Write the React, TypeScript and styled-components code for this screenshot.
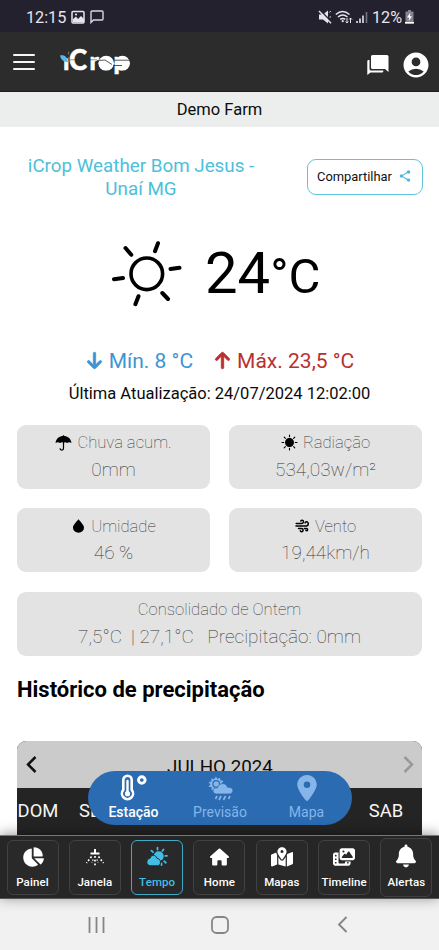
import React from "react";
import styled, { createGlobalStyle, css } from "styled-components";
import { FaArrowDown, FaArrowUp, FaBell, FaChartPie, FaHouse, FaLocationDot, FaMapLocationDot, FaPhotoFilm } from "react-icons/fa6";
import { MdAccountCircle, MdShare } from "react-icons/md";

const GlobalStyle = createGlobalStyle`
  * { box-sizing: border-box; }
  body { margin: 0; background: #fff; font-family: Roboto, "Liberation Sans", sans-serif; color: #0b0b0b; }
  svg { display: block; flex: none; }
`;

const Phone = styled.div`
  width: 439px;
  height: 950px;
  display: flex;
  flex-direction: column;
  overflow: hidden;
  background: #fff;
`;

const StatusBar = styled.div`
  height: 32px;
  flex: none;
  display: flex;
  align-items: center;
  justify-content: space-between;
  padding: 2px 25px 0 26px;
  background: #23212d;
  color: #e6e4ec;
  font-size: 16.2px;
`;

const StatusGroup = styled.div<{ $gap: number }>`
  display: flex;
  align-items: center;
  gap: ${(p) => p.$gap}px;
`;

const Header = styled.header`
  height: 60px;
  flex: none;
  display: flex;
  align-items: center;
  padding: 0 8px 0 13px;
  background: #2c2c2c;
  border-bottom: 1px solid #1c1c1c;
`;

const Burger = styled.div`
  width: 22px;
  height: 16px;
  margin-right: 24px;
  display: flex;
  flex-direction: column;
  justify-content: space-between;
  span { height: 2px; border-radius: 1px; background: #f6f6f6; }
`;

const HeaderActions = styled.div`
  margin-left: auto;
  padding-top: 7px;
  display: flex;
  align-items: center;
  gap: 12px;
  color: #fff;
`;

const FarmBar = styled.div`
  height: 35px;
  flex: none;
  display: flex;
  align-items: center;
  justify-content: center;
  padding-bottom: 1px;
  background: #ebeeed;
  font-size: 16.5px;
`;

const Content = styled.main`
  position: relative;
  flex: 1;
  min-height: 0;
  overflow: hidden;
  padding: 0 17px;
`;

const StationRow = styled.div`
  height: 100px;
  padding-top: 28px;
  display: flex;
  justify-content: space-between;
  align-items: flex-start;
`;

const StationName = styled.h1`
  width: 248px;
  margin: 0;
  color: #4dbfda;
  font-size: 18.8px;
  font-weight: 400;
  line-height: 22.5px;
  text-align: center;
  white-space: nowrap;
`;

const ShareButton = styled.button`
  width: 116px;
  height: 36px;
  margin: 4px -1px 0 0;
  padding: 0 10px 2px 9px;
  display: flex;
  align-items: center;
  justify-content: space-between;
  border: 1px solid #62c4da;
  border-radius: 9px;
  background: #fff;
  color: #111;
  font: 400 12.9px Roboto, sans-serif;
  svg { color: #48b9dc; }
`;

const Current = styled.section`
  height: 118px;
  display: flex;
  align-items: flex-start;
  padding: 12px 0 0 92px;
`;

const Degrees = styled.div`
  display: flex;
  align-items: baseline;
  margin: 0 0 0 22px;
  font-size: 58px;
  line-height: 68px;
  color: #000;
  small { font-size: 49px; }
`;

const Extremes = styled.div`
  height: 31px;
  display: flex;
  align-items: center;
  justify-content: center;
  gap: 20px;
`;

const Extreme = styled.div<{ $color: string }>`
  display: flex;
  align-items: center;
  gap: 5px;
  color: ${(p) => p.$color};
  font-size: 21px;
  svg { stroke: currentColor; stroke-width: 22px; }
`;

const Updated = styled.div`
  height: 48.5px;
  padding-top: 7px;
  text-align: center;
  font-size: 16.5px;
  line-height: 21px;
`;

const Cards = styled.section`
  display: grid;
  grid-template-columns: 193px 193px;
  grid-auto-rows: 64px;
  gap: 19.5px 19px;
`;

const Card = styled.div<{ $wide?: boolean }>`
  ${(p) => p.$wide && css`grid-column: 1 / -1;`}
  padding-top: 5px;
  display: flex;
  flex-direction: column;
  align-items: center;
  border-radius: 9px;
  background: #e3e3e3;
  color: #333;
  font-weight: 100;
`;

const CardTitle = styled.div`
  height: 26px;
  display: flex;
  align-items: center;
  gap: 5px;
  font-size: 16.6px;
  white-space: pre;
  svg { color: #000; }
`;

const CardValue = styled.div`
  height: 27px;
  font-size: 19px;
  line-height: 27px;
  white-space: pre;
`;

const SectionTitle = styled.h2`
  height: 85px;
  margin: 0;
  padding-top: 20px;
  font-size: 22px;
  font-weight: 700;
  line-height: 28px;
  color: #000;
`;

const Calendar = styled.section`
  height: 110px;
  overflow: hidden;
  border-radius: 9px 9px 0 0;
  background: #242424;
`;

const MonthBar = styled.div`
  height: 47px;
  display: flex;
  align-items: center;
  justify-content: space-between;
  padding: 1px 8px 0 9px;
  background: #cbcbcb;
  font-size: 18.8px;
  span { padding-top: 5px; }
`;

const WeekDays = styled.div`
  display: grid;
  grid-template-columns: repeat(7, 58px);
  padding-top: 11px;
  color: #f5f5f5;
  font-size: 18.4px;
  line-height: 24px;
`;

const WeekDay = styled.span<{ $column: number }>`
  grid-column: ${(p) => p.$column};
  width: 42px;
  text-align: center;
`;

const TabPill = styled.div`
  position: absolute;
  left: 88px;
  bottom: 10px;
  width: 264px;
  height: 54px;
  display: grid;
  grid-template-columns: 91px 82px 91px;
  border-radius: 27px;
  background: #2a6bb2;
`;

const Tab = styled.div<{ $active?: boolean }>`
  padding-top: 3px;
  display: flex;
  flex-direction: column;
  align-items: center;
  color: ${(p) => (p.$active ? "#fff" : "#86b5ea")};
  font-size: 14px;
  font-weight: ${(p) => (p.$active ? 500 : 400)};
  line-height: 18px;
`;

const MapPin = styled(FaLocationDot)`
  margin: 1px 0 2px;
`;

const BottomNav = styled.nav`
  position: relative;
  height: 64px;
  flex: none;
  display: grid;
  grid-template-columns: repeat(7, 52px);
  justify-content: space-between;
  align-items: center;
  padding: 0 6.5px;
  border-top: 1px solid #777;
  border-bottom: 1px solid #555;
  background: #262626;
  box-shadow: 0 -1px 12px rgba(0, 0, 0, 0.42);
`;

const NavItem = styled.div<{ $active?: boolean; $tall?: boolean }>`
  height: ${(p) => (p.$tall ? 59 : 55)}px;
  padding-top: ${(p) => (p.$tall ? 5 : 4)}px;
  display: flex;
  flex-direction: column;
  align-items: center;
  gap: ${(p) => (p.$tall ? 6 : 5)}px;
  border: 1px solid ${(p) => (p.$active ? "#3fa9c6" : "#414141")};
  border-radius: 6px;
  background: #292929;
  color: ${(p) => (p.$active ? "#42bde5" : "#fff")};
  font-size: 11.5px;
  font-weight: 500;
  line-height: 16px;
  letter-spacing: 0.1px;
  svg { height: 24px; }
`;

const SystemBar = styled.footer`
  height: 51px;
  flex: none;
  display: grid;
  grid-template-columns: 123px 123px 123px;
  justify-content: center;
  align-items: center;
  justify-items: center;
  background: #f1f1f1;
`;

const Logo = () => (
  <svg width="74" height="34" viewBox="0 0 74 34">
    <text x="4 10 30.5 39.5 54.5" y="25" fill="#fff" stroke="#fff" strokeWidth="0.5" fontFamily="Lato, sans-serif" fontWeight="900" fontSize="25">
      i<tspan fontSize="27.5">C</tspan>rop
    </text>
    <rect x="3" y="4" width="6.5" height="9.5" fill="#2c2c2c" />
    <path d="M1 10.5C4 9.5 8.4 11 9 17C5.5 17 2 15.5 1 10.5Z" fill="#52bbea" />
    <ellipse cx="47.2" cy="18.2" rx="7.8" ry="7.4" fill="#fff" />
    <ellipse cx="63.4" cy="18.2" rx="7.6" ry="7.4" fill="#fff" />
    <path d="M38 15.5L46 15M46 15L53 19.5M54 20.5H63M55 15.2H71" fill="none" stroke="#2c2c2c" strokeWidth="0.8" />
    <path d="M9 14.8H38" stroke="#2c2c2c" strokeWidth="0.5" />
  </svg>
);

const PictureIcon = () => (
  <svg width="14" height="14" viewBox="0 0 14 14">
    <rect x="1" y="1.5" width="12" height="11.5" rx="1" fill="none" stroke="#e6e4ec" strokeWidth="1.5" />
    <path d="M2 12V9L5 6.5L7 9L10 6L13 9V12.5Z" fill="#e6e4ec" />
    <circle cx="5" cy="4.5" r="1.1" fill="#e6e4ec" />
  </svg>
);

const BubbleIcon = () => (
  <svg width="14" height="14" viewBox="0 0 14 14" fill="none" stroke="#d9d3ea" strokeWidth="1.4">
    <path d="M1 12.5V2Q1 1 2 1H12Q13 1 13 2V9Q13 10 12 10H3.5Z" />
  </svg>
);

const MuteIcon = () => (
  <svg width="14" height="14" viewBox="0 0 14 14" fill="#e6e4ec">
    <path d="M1 4.5H5L10 .5V13.5L5 9.5H1Z" />
    <path d="M11.3 2.5L12.8 1M11.5 7H13" fill="none" stroke="#e6e4ec" />
    <path d="M2 .2L14 12.4" stroke="#23212d" strokeWidth="1.5" />
    <path d="M1 1L13 13.2" stroke="#e6e4ec" strokeWidth="1.5" />
  </svg>
);

const WifiIcon = () => (
  <svg width="18" height="14" viewBox="0 0 18 14" fill="none" stroke="#e6e4ec" strokeWidth="1.5">
    <path d="M.8 4.5Q7.5-1.5 14.5 4.5M3 7Q7.7 3 12.5 7M5.2 9.4Q7.7 7.4 10.2 9.4" />
    <circle cx="7.7" cy="11.2" r="1.1" fill="#e6e4ec" stroke="none" />
    <path d="M12 8V13M10.5 11.5L12 13L13.4 11.5M15.5 13V8M14.1 9.5L15.5 8L17 9.5" strokeWidth="1" />
  </svg>
);

const SignalIcon = () => (
  <svg width="13" height="14" viewBox="0 0 13 14">
    <path d="M1 13V11M4 13V8.5M7 13V5.5" stroke="#e6e4ec" strokeWidth="1.6" />
    <path d="M10.5 13V2" stroke="#77747f" strokeWidth="1.6" />
  </svg>
);

const BatteryIcon = () => (
  <svg width="9" height="14" viewBox="0 0 9 14">
    <path d="M3 0H6V1.5H8.5V13.5H.5V1.5H3Z" fill="#85838d" />
    <path d="M0 12H9V13.6H0Z" fill="#fff" />
    <path d="M5.4 2.5L2 7.6H4.2L3.7 11L7 6.2H4.8Z" fill="#fff" />
  </svg>
);

const ChatIcon = () => (
  <svg width="22" height="22" viewBox="0 0 22 22" fill="#fff">
    <path d="M5.5 1H20Q21.5 1 21.5 2.5V18L18 15H5.5Q4 15 4 13.5V2.5Q4 1 5.5 1Z" />
    <path d="M2.5 6H1.5Q.3 6 .3 7.2V21L3.5 18.5H15Q16.3 18.5 16.3 17.2V16.6H4Q2.5 16.6 2.5 15Z" />
  </svg>
);

const BigSun = () => (
  <svg width="74" height="74" viewBox="0 0 74 74" fill="none" stroke="#000" strokeLinecap="round">
    <circle cx="37.8" cy="34.8" r="15.8" strokeWidth="3.6" />
    <path d="M46 12.2L49 4.2M61.5 30L70.5 28.7M53.3 54L59 60M29.5 57.2L26.4 65.2M14 39L5 40.2M22.3 15.8L16.5 9" strokeWidth="4" />
  </svg>
);

const UmbrellaIcon = () => (
  <svg width="17" height="16" viewBox="0 0 17 16">
    <path d="M.5 8C1 3.5 4.5 1 8.5 1S16 3.5 16.5 8Q14 6.5 12 8Q10 6.7 8.5 8Q7 6.7 5 8Q3 6.5 .5 8Z" fill="#000" />
    <path d="M8.5 .3V13Q8.5 15.1 6.7 15.1Q5 15.1 5 13.3" fill="none" stroke="#000" strokeWidth="1.2" />
  </svg>
);

const DropIcon = () => (
  <svg width="15" height="14" viewBox="0 0 15 14">
    <path d="M7.5 .3C9.5 3 13 5.8 13 8.7A5.5 5 0 0 1 2 8.7C2 5.8 5.5 3 7.5 .3Z" fill="#000" />
  </svg>
);

const SmallSun = () => (
  <svg width="17" height="17" viewBox="0 0 17 17" stroke="#000" strokeWidth="1.1" strokeLinecap="round">
    <circle cx="8.5" cy="8.5" r="3.9" fill="#000" />
    <path d="M8.5 1V2.7M8.5 14.3V16M1 8.5H2.7M14.3 8.5H16M3.2 3.2L4.4 4.4M12.6 12.6L13.8 13.8M3.2 13.8L4.4 12.6M12.6 4.4L13.8 3.2" />
  </svg>
);

const WindIcon = () => (
  <svg width="15" height="14" viewBox="0 0 15 14" fill="none" stroke="#000" strokeWidth="1.5" strokeLinecap="round">
    <path d="M1.2 4.4H6.8C9 4.4 8.9 1 6.9 1.2Q6 1.3 5.8 2" />
    <path d="M1 6.9H11.2C14 6.9 13.8 2.6 11.4 2.8Q10.3 2.9 10.1 3.9" />
    <path d="M3.5 9.4H6.5C8.6 9.4 8.5 12.9 6.5 12.7Q5.6 12.6 5.3 11.8M9.5 9.4H11.2Q13 9.6 12.5 11.1Q12 12.1 10.9 11.4" />
  </svg>
);

const Chevron = ({ left, color, size = 17, stroke = 2.5 }: { left?: boolean; color: string; size?: number; stroke?: number }) => (
  <svg width={size * 0.65} height={size} viewBox="0 0 11 17" fill="none" stroke={color} strokeWidth={stroke}>
    <path d={left ? "M9.5 1L2 8.5L9.5 16" : "M1.5 1L9 8.5L1.5 16"} />
  </svg>
);

const Thermometer = () => (
  <svg width="30" height="29" viewBox="0 0 30 29" fill="none" stroke="#fff">
    <path d="M4.3 6a4.2 4.2 0 0 1 8.4 0V15.8a5.6 5.6 0 1 1-8.4 0Z" strokeWidth="2.6" />
    <path d="M8.5 7V18" strokeWidth="2.4" strokeLinecap="round" />
    <circle cx="8.5" cy="19.7" r="2.6" fill="#fff" stroke="none" />
    <circle cx="22.8" cy="6" r="3.3" strokeWidth="2.9" />
  </svg>
);

const ForecastIcon = () => (
  <svg width="28" height="29" viewBox="0 0 28 29" fill="#86b5ea" stroke="#86b5ea">
    <path d="M10 2.5L11.3 5L14 3.8L14.5 6.6L17.5 6.8L16 9L9 17L5.5 16L5.8 13.2L2.5 12.7L4.4 10.4L2.5 8L5.4 7.4L5.2 4.5L8 5.2Z" stroke="none" />
    <circle cx="10.2" cy="9.9" r="3.3" fill="none" stroke="#2a6bb2" strokeWidth="1.2" />
    <path d="M10.5 20C4.8 19.5 6.5 12.8 11.3 13.8C13 8.2 20.3 8.4 21.5 13.2C28.5 12.5 28.5 20 23 20Z" stroke="#2a6bb2" strokeWidth="0.8" />
    <path d="M11 22L9.5 25M15 22L13 26M19.5 22L17.5 26M24 22L22.5 25" strokeWidth="1.7" />
  </svg>
);

const SprinklerIcon = () => (
  <svg width="20" height="24" viewBox="0 0 20 24" fill="none" stroke="#fff" strokeWidth="1.7">
    <path d="M10 4V8M5.5 8.5H14.5" strokeWidth="2" />
    <path d="M10 11V21M6.5 11.5L1.5 18M13.5 11.5L18.5 18" strokeDasharray="1.8 1.9" />
    <path d="M8.2 14.5L6.8 17.5M11.8 14.5L13.2 17.5" strokeDasharray="1.5 1.3" strokeWidth="1.2" />
  </svg>
);

const WeatherIcon = () => (
  <svg width="22" height="24" viewBox="0 0 22 24" fill="#42bde5" stroke="#42bde5">
    <circle cx="12.7" cy="11.2" r="5" stroke="none" />
    <path d="M11.5 2.7V4.6M17.5 4.5L16.4 6M21 10.8H19.2M19.8 17.7L18.2 16.3M5.4 5.7L7 7.2M15.5 20V18.4" strokeWidth="1.8" strokeLinecap="round" />
    <path d="M4.8 20.8C-.4 20.8-.4 14 4.1 13.2C4.9 9.4 10 9.4 11 13.4C15.6 13.7 15.6 20.8 11.3 20.8Z" stroke="#292929" strokeWidth="1" />
  </svg>
);

const metrics = [
  { label: "Chuva acum.", value: "0mm", icon: <UmbrellaIcon /> },
  { label: "Radiação", value: "534,03w/m²", icon: <SmallSun /> },
  { label: "Umidade", value: "46 %", icon: <DropIcon /> },
  { label: "Vento", value: "19,44km/h", icon: <WindIcon /> },
];

const weekDays = [
  { label: "DOM", column: 1 },
  { label: "SEG", column: 2 },
  { label: "SAB", column: 7 },
];

const navigation = [
  { label: "Painel", icon: <FaChartPie size={22} /> },
  { label: "Janela", icon: <SprinklerIcon /> },
  { label: "Tempo", icon: <WeatherIcon />, active: true },
  { label: "Home", icon: <FaHouse size={19} /> },
  { label: "Mapas", icon: <FaMapLocationDot size={22} /> },
  { label: "Timeline", icon: <FaPhotoFilm size={22} /> },
  { label: "Alertas", icon: <FaBell size={20} />, tall: true },
];

export default function App() {
  return (
    <Phone>
      <GlobalStyle />
      <StatusBar>
        <StatusGroup $gap={5}>
          <span>12:15</span>
          <PictureIcon />
          <BubbleIcon />
        </StatusGroup>
        <StatusGroup $gap={3}>
          <MuteIcon />
          <WifiIcon />
          <SignalIcon />
          <span>12%</span>
          <BatteryIcon />
        </StatusGroup>
      </StatusBar>
      <Header>
        <Burger><span /><span /><span /></Burger>
        <Logo />
        <HeaderActions>
          <ChatIcon />
          <MdAccountCircle size={30} />
        </HeaderActions>
      </Header>
      <FarmBar>Demo Farm</FarmBar>
      <Content>
        <StationRow>
          <StationName>iCrop Weather Bom Jesus -<br />Unaí MG</StationName>
          <ShareButton>Compartilhar<MdShare size={14} /></ShareButton>
        </StationRow>
        <Current>
          <BigSun />
          <Degrees>24<small>°C</small></Degrees>
        </Current>
        <Extremes>
          <Extreme $color="#3e95d2"><FaArrowDown size={19} />Mín. 8 °C</Extreme>
          <Extreme $color="#ba302f"><FaArrowUp size={19} />Máx. 23,5 °C</Extreme>
        </Extremes>
        <Updated>Última Atualização: 24/07/2024 12:02:00</Updated>
        <Cards>
          {metrics.map((m) => (
            <Card key={m.label}>
              <CardTitle>{m.icon}{m.label}</CardTitle>
              <CardValue>{m.value}</CardValue>
            </Card>
          ))}
          <Card $wide>
            <CardTitle>Consolidado de Ontem</CardTitle>
            <CardValue>{"7,5°C  | 27,1°C   Precipitação: 0mm"}</CardValue>
          </Card>
        </Cards>
        <SectionTitle>Histórico de precipitação</SectionTitle>
        <Calendar>
          <MonthBar>
            <Chevron left color="#111" />
            <span>JULHO 2024</span>
            <Chevron color="#999" />
          </MonthBar>
          <WeekDays>
            {weekDays.map((d) => <WeekDay key={d.label} $column={d.column}>{d.label}</WeekDay>)}
          </WeekDays>
        </Calendar>
        <TabPill>
          <Tab $active><Thermometer />Estação</Tab>
          <Tab><ForecastIcon />Previsão</Tab>
          <Tab><MapPin size={26} />Mapa</Tab>
        </TabPill>
      </Content>
      <BottomNav>
        {navigation.map((n) => (
          <NavItem key={n.label} $active={n.active} $tall={n.tall}>{n.icon}{n.label}</NavItem>
        ))}
      </BottomNav>
      <SystemBar>
        <svg width="18" height="18" viewBox="0 0 18 18" stroke="#858585" strokeWidth="1.8"><path d="M1.5 1V17M8.5 1V17M15.5 1V17" /></svg>
        <svg width="18" height="18" viewBox="0 0 18 18" fill="none" stroke="#858585" strokeWidth="1.8"><rect x="1" y="1" width="16" height="16" rx="4.5" /></svg>
        <Chevron left color="#858585" size={17} stroke={1.9} />
      </SystemBar>
    </Phone>
  );
}
